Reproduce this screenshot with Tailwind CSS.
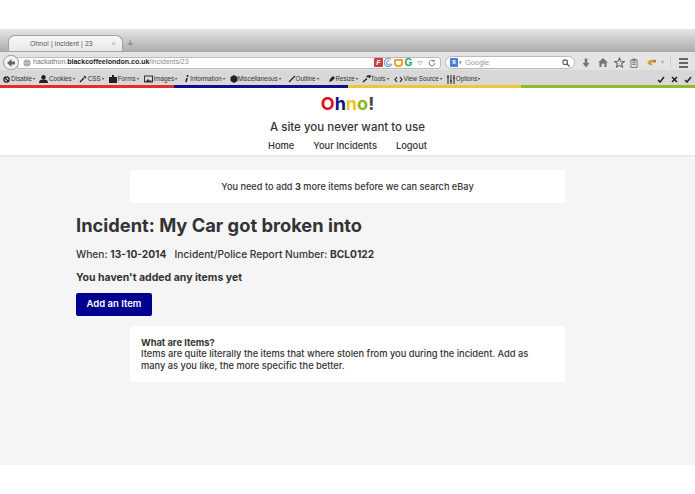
<!DOCTYPE html>
<html>
<head>
<meta charset="utf-8">
<script src="https://cdn.jsdelivr.net/npm/@tailwindcss/browser@4"></script>
</head>
<body class="bg-white w-[695px] h-[494px] overflow-hidden font-['Inter','Liberation_Sans',sans-serif] text-[#333]">
<div class="h-[29px]"></div>
<!-- tab strip -->
<div class="h-[22px] bg-gradient-to-b from-[#e6e6e6] to-[#aeaeae] flex items-end relative">
  <div class="ml-[8px] w-[115px] h-[16px] bg-gradient-to-b from-[#f8f8f8] to-[#e8e8e8] rounded-t-[7px] border border-b-0 border-[#a0a0a0] flex items-center text-[#555] font-['Liberation_Sans',sans-serif]">
    <span class="ml-[21px] text-[6.800px] tracking-[0.1px] pt-[1px]">Ohno! | incident | 23</span>
    <span class="ml-auto mr-[6px] text-[#aaa] text-[8px]">×</span>
  </div>
  <span class="ml-[4px] text-[#8f8f8f] text-[11px] font-bold leading-[15px] font-['Liberation_Sans',sans-serif]">+</span>
</div>
<!-- url bar -->
<div class="h-[19px] pt-[3px] bg-[#e4e4e4] border-t border-[#a5a5a5] flex items-center font-['Liberation_Sans',sans-serif]">
  <div class="ml-[3px] w-[16px] h-[15px] rounded-full bg-[#f2f2f2] border border-[#999] flex items-center justify-center z-10 shrink-0">
    <svg width="10" height="10" viewBox="0 0 10 10"><path d="M5.500 1 1 5l4.500 4V6.500H9v-3H5.500z" fill="#666"/></svg>
  </div>
  <div class="-ml-[2px] w-[424px] h-[12px] bg-white border border-[#bbb] rounded-r-[3px] flex items-center shrink-0 text-[7px]">
    <svg class="ml-[5px] shrink-0" width="8" height="8" viewBox="0 0 8 8"><circle cx="4" cy="4" r="3.500" fill="#9a9a9a"/><path d="M0.500 4h7M4 .5c-2 2-2 5 0 7M4 .5c2 2 2 5 0 7" stroke="#e8e8e8" stroke-width=".6" fill="none"/></svg>
    <span class="ml-[2px] text-[#777]">hackathon.</span><span class="text-[#222] font-bold">blackcoffeelondon.co.uk</span><span class="text-[#8a8a8a]">/incidents/23</span>
    <span class="ml-auto w-[9px] h-[9px] bg-[#c8403c] rounded-[1px] shrink-0 text-white text-[7px] leading-[9px] text-center font-bold italic">F</span>
    <svg class="ml-[1px] shrink-0" width="9" height="9" viewBox="0 0 9 9"><path d="M7 1.500A4 4 0 1 0 8 6M5.500 3A2 2 0 1 0 6.500 5.500" fill="none" stroke="#6f9fcf" stroke-width="1.100"/></svg>
    <span class="ml-[1px] w-[9px] h-[8px] rounded-b-[4px] rounded-t-[1px] border-2 border-[#eda52c] shrink-0"></span>
    <span class="ml-[1px] w-[9px] text-[#1ea362] text-[10px] leading-[9px] font-bold shrink-0 text-center">G</span>
    <svg class="ml-[4px] shrink-0" width="6" height="6" viewBox="0 0 6 6"><path d="M.5 1.500 3 5l2.500-3.500z" fill="none" stroke="#c4c4c4"/></svg>
    <svg class="ml-[5px] mr-[4px] shrink-0" width="8" height="8" viewBox="0 0 8 8"><path d="M6.800 4a2.800 2.800 0 1 1-.8-2M6.200.8V2.400H4.600" fill="none" stroke="#777" stroke-width="1"/></svg>
  </div>
  <div class="ml-[4px] w-[130px] h-[13px] bg-white border border-[#bbb] rounded-full flex items-center shrink-0 text-[7.500px]">
    <span class="ml-[4px] w-[8px] h-[9px] bg-[#4a7ed8] rounded-[1px] text-white text-[6px] leading-[9px] text-center font-bold">8</span>
    <span class="ml-[1px] text-[#666] text-[5px]">▾</span>
    <span class="ml-[3px] text-[#999]">Google</span>
    <svg class="ml-auto mr-[4px]" width="8" height="8" viewBox="0 0 8 8"><circle cx="3.200" cy="3.200" r="2.300" fill="none" stroke="#555" stroke-width="1.100"/><path d="M5 5l2.500 2.500" stroke="#555" stroke-width="1.300"/></svg>
  </div>
  <!-- right-hand toolbar icons -->
  <svg class="ml-[7px] shrink-0" width="8" height="10" viewBox="0 0 9 10"><path d="M3 0h3v5h2.500L4.500 10 .5 5H3z" fill="#777"/></svg>
  <svg class="ml-[8px] shrink-0" width="10" height="9" viewBox="0 0 11 10"><path d="M5.500 0 11 5H9.500v5h-2.500V6.500H4V10H1.500V5H0z" fill="#777"/></svg>
  <svg class="ml-[6px] shrink-0" width="11" height="11" viewBox="0 0 11 11"><path d="M5.500 1 6.900 4.200l3.400.3-2.600 2.200.8 3.400-3-1.800-3 1.800.8-3.400L.7 4.500l3.400-.3z" fill="none" stroke="#666" stroke-width="1.100"/></svg>
  <svg class="ml-[5px] shrink-0" width="8" height="10" viewBox="0 0 9 11"><path d="M1 2h7v8.500H1zM3 1h3v2H3zM2.500 5h4M2.500 7h4" fill="none" stroke="#777" stroke-width="1.100"/></svg>
  <svg class="ml-[9px] shrink-0" width="9" height="7" viewBox="0 0 10 8"><path d="M0 4 3 1h3l-1 3 1 3H3z" fill="#d99a2b"/><rect x="6" y="1" width="4" height="3" fill="#b5762a"/></svg>
  <span class="ml-[5px] text-[#aaa] text-[6px]">▾</span>
  <span class="ml-[6px] w-px h-[13px] bg-[#cfcfcf]"></span>
  <div class="ml-[8px] w-[9px] flex flex-col gap-[2px] shrink-0">
    <span class="h-[2px] bg-[#666]"></span><span class="h-[2px] bg-[#666]"></span><span class="h-[2px] bg-[#666]"></span>
  </div>
</div>
<!-- web developer toolbar -->
<div class="h-[15px] pt-[3px] bg-[#d8d8d8] flex items-center font-['Liberation_Sans',sans-serif] text-[6.300px] text-[#333] whitespace-nowrap">
  <div class="flex items-center ml-[3px]"><svg width="7" height="7" viewBox="0 0 8 8"><circle cx="4" cy="4" r="3" fill="none" stroke="#222" stroke-width="1.400"/><path d="M2 2l4 4" stroke="#222" stroke-width="1.400"/></svg><span class="ml-[1px]">Disable</span><span class="text-[4px] ml-[1px]">▾</span></div>
  <div class="flex items-center ml-[4px]"><svg width="9" height="8" viewBox="0 0 9 8"><circle cx="4.500" cy="2.200" r="2.200" fill="#222"/><path d="M0 8c0-3 2-3.500 4.500-3.500S9 5 9 8z" fill="#222"/></svg><span class="ml-[1px]">Cookies</span><span class="text-[4px] ml-[1px]">▾</span></div>
  <div class="flex items-center ml-[4px]"><svg width="8" height="8" viewBox="0 0 8 8"><path d="M1 7 5 3M5 1l2 2" stroke="#222" stroke-width="1.400" fill="none"/></svg><span class="ml-[1px]">CSS</span><span class="text-[4px] ml-[1px]">▾</span></div>
  <div class="flex items-center ml-[5px]"><svg width="8" height="8" viewBox="0 0 8 8"><path d="M0 2h8v6H0zM3 0h2v2H3z" fill="#222"/></svg><span class="ml-[1px]">Forms</span><span class="text-[4px] ml-[1px]">▾</span></div>
  <div class="flex items-center ml-[5px]"><svg width="9" height="8" viewBox="0 0 9 8"><rect x=".5" y="1" width="8" height="6" fill="none" stroke="#333"/><path d="M1 7l3-3 2 2 1-1 1 2z" fill="#333"/></svg><span class="ml-[1px]">Images</span><span class="text-[4px] ml-[1px]">▾</span></div>
  <div class="flex items-center ml-[7px]"><svg width="5" height="8" viewBox="0 0 5 8"><circle cx="3.500" cy="1" r="1" fill="#222"/><path d="M3 3 2 7" stroke="#222" stroke-width="1.500"/></svg><span class="ml-[1px]">Information</span><span class="text-[4px] ml-[1px]">▾</span></div>
  <div class="flex items-center ml-[5px]"><svg width="8" height="8" viewBox="0 0 8 8"><path d="M4 0 7.500 2v4L4 8 .5 6V2z" fill="#222"/></svg><span>Miscellaneous</span><span class="text-[4px] ml-[1px]">▾</span></div>
  <div class="flex items-center ml-[7px]"><svg width="8" height="8" viewBox="0 0 8 8"><path d="M1 7 7 1" stroke="#222" stroke-width="1.300"/></svg><span>Outline</span><span class="text-[4px] ml-[1px]">▾</span></div>
  <div class="flex items-center ml-[9px]"><svg width="8" height="8" viewBox="0 0 8 8"><path d="M1 7 2 4l3-3 2 2-3 3z" fill="#222"/></svg><span>Resize</span><span class="text-[4px] ml-[1px]">▾</span></div>
  <div class="flex items-center ml-[4px]"><svg width="9" height="8" viewBox="0 0 9 8"><path d="M1 7 5 3.500M4.500 2 6 1h2L7 3" stroke="#222" stroke-width="1.500" fill="none"/></svg><span>Tools</span><span class="text-[4px] ml-[1px]">▾</span></div>
  <div class="flex items-center ml-[5px]"><svg width="9" height="7" viewBox="0 0 9 7"><path d="M3 1 1 3.500 3 6M6 1l2 2.500L6 6" stroke="#222" stroke-width="1.200" fill="none"/></svg><span class="ml-[1px]">View Source</span><span class="text-[4px] ml-[1px]">▾</span></div>
  <div class="flex items-center ml-[5px]"><svg width="8" height="9" viewBox="0 0 8 9"><path d="M1 0v9M4 0v9M7 0v9" stroke="#222"/><path d="M0 2h2M3 6h2M6 3h2" stroke="#222"/></svg><span class="ml-[1px]">Options</span><span class="text-[4px] ml-[1px]">▾</span></div>
  <div class="ml-auto mr-[3px] flex items-center gap-[6px]">
    <svg width="8" height="7" viewBox="0 0 8 7"><path d="M1 4l2 2 4-5" stroke="#222" stroke-width="1.500" fill="none"/></svg>
    <svg width="7" height="7" viewBox="0 0 7 7"><path d="M1 1l5 5M6 1 1 6" stroke="#222" stroke-width="1.600"/></svg>
    <svg width="8" height="7" viewBox="0 0 8 7"><path d="M1 4l2 2 4-5" stroke="#222" stroke-width="1.500" fill="none"/></svg>
  </div>
</div>
<!-- colour stripe -->
<div class="h-[3px] flex">
  <div class="w-[174px] bg-[#e82b2b]"></div>
  <div class="w-[174px] bg-[#10108c]"></div>
  <div class="w-[173px] bg-[#f2c630]"></div>
  <div class="flex-1 bg-[#90bb2e]"></div>
</div>
<!-- site header -->
<header class="h-[69px] bg-white border-b-2 border-[#ececec] flex flex-col items-center">
  <div class="mt-[5px] h-[22px] text-[18px] leading-[22px] font-bold"><span class="text-[#e0101c]">O</span><span class="text-[#10108c]">h</span><span class="text-[#f0c420]">n</span><span class="text-[#8ab820]">o</span><span class="text-[#444]">!</span></div>
  <p class="mt-[4px] h-[16px] text-[11.500px] leading-[16px] font-medium">A site you never want to use</p>
  <nav class="mt-[4px] flex gap-[19px] text-[9.300px] leading-[14px] font-medium"><a>Home</a><a>Your Incidents</a><a>Logout</a></nav>
</header>
<!-- main -->
<main class="h-[308px] bg-[#f5f5f5] px-[76px] pt-[13px]">
  <div class="mx-[54px] h-[33px] bg-white rounded-[3px] flex items-center justify-center text-[9.200px] font-medium"><span>You need to add <b>3</b> more items before we can search eBay</span></div>
  <h1 class="mt-[9px] text-[18.300px] leading-[26px] font-bold">Incident: My Car got broken into</h1>
  <p class="mt-[9px] text-[10.200px] leading-[14px] font-medium">When: <b>13-10-2014</b> &nbsp; Incident/Police Report Number: <b>BCL0122</b></p>
  <p class="mt-[10px] text-[10.500px] leading-[14px] font-bold">You haven't added any items yet</p>
  <button class="mt-[8px] block w-[76px] h-[23px] bg-[#000090] rounded-[2px] text-white text-[9.500px] font-semibold">Add an Item</button>
  <div class="mt-[10px] mx-[54px] h-[56px] bg-white rounded-[3px] pl-[11px] pr-[24px] pt-[11px] text-[9.300px] leading-[11.300px] font-medium">
    <b>What are Items?</b><br>Items are quite literally the items that where stolen from you during the incident. Add as many as you like, the more specific the better.
  </div>
</main>
</body>
</html>
